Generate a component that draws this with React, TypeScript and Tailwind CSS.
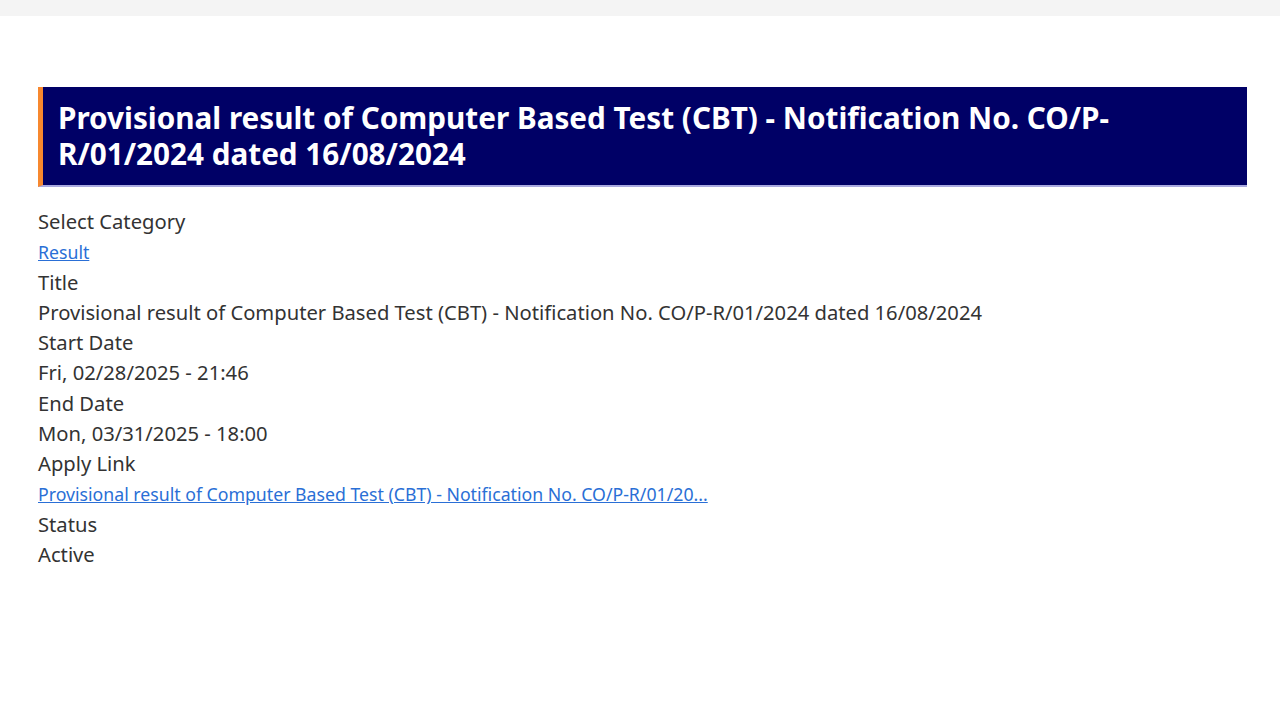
export default function App() {
  const font = { fontFamily: '"Noto Sans", "Open Sans", sans-serif' };
  return (
    <div className="min-h-screen bg-white text-[#333333]" style={font}>
      <div className="h-4 bg-[#f4f4f4]" />
      <main className="pl-[38px] pr-[33px] pt-[71px]">
        <div className="border-l-[5px] border-[#f7882f] border-b-2 border-b-[#a9a9e0] bg-[#000066] px-[15px] py-[13px]">
          <h1 className="text-[29.7px] font-bold leading-[36px] text-white">
            Provisional result of Computer Based Test (CBT) - Notification No. CO/P-R/01/2024 dated 16/08/2024
          </h1>
        </div>
        <dl className="mt-[19px] text-[20.2px] leading-[30.1px]">
          <dt>Select Category</dt>
          <dd>
            <a href="#" className="text-[17.7px] text-[#2a6fd6] underline">
              Result
            </a>
          </dd>
          <dt>Title</dt>
          <dd>Provisional result of Computer Based Test (CBT) - Notification No. CO/P-R/01/2024 dated 16/08/2024</dd>
          <dt>Start Date</dt>
          <dd>Fri, 02/28/2025 - 21:46</dd>
          <dt>End Date</dt>
          <dd>Mon, 03/31/2025 - 18:00</dd>
          <dt>Apply Link</dt>
          <dd>
            <a href="#" className="text-[17.7px] text-[#2a6fd6] underline">
              Provisional result of Computer Based Test (CBT) - Notification No. CO/P-R/01/20...
            </a>
          </dd>
          <dt>Status</dt>
          <dd>Active</dd>
        </dl>
      </main>
    </div>
  );
}
